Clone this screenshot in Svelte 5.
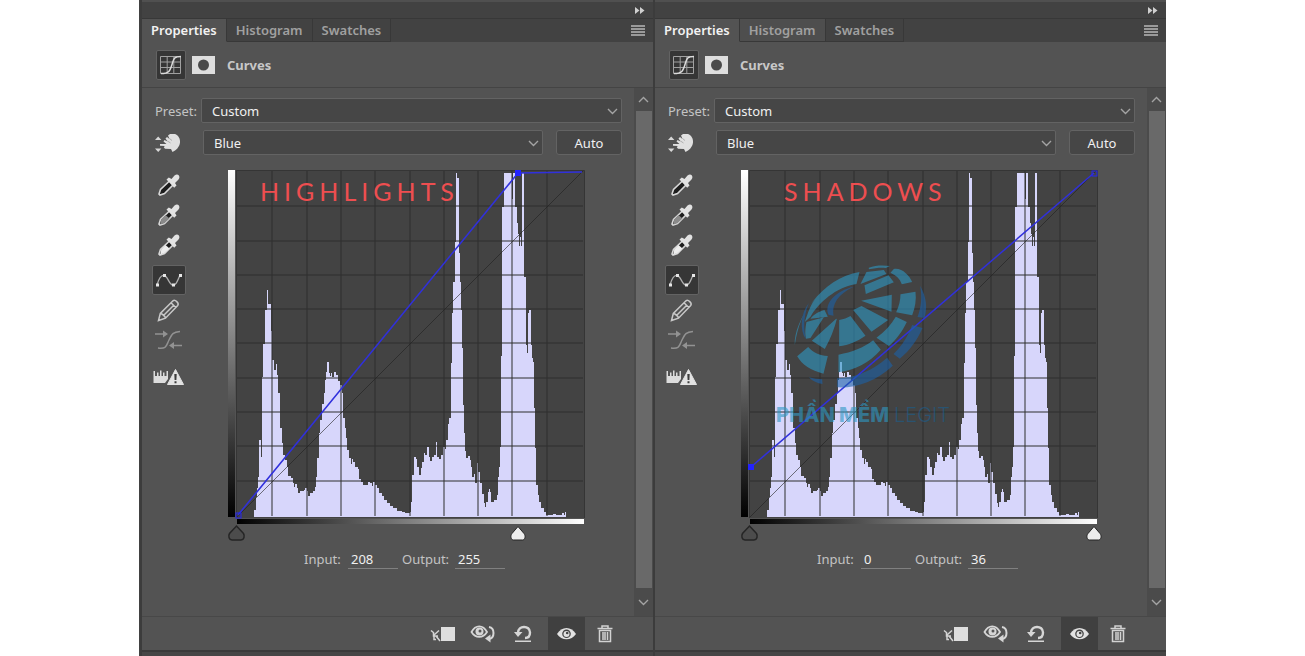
<script lang="ts">
	type Point = { x: number; y: number };

	type Panel = {
		id: string;
		hovered: string;
		title: string;
		titleX: number;
		curve: Point[];
		selected: number;
		whiteX: number;
		input: string;
		output: string;
		watermark: boolean;
	};

	const tabs = ['Properties', 'Histogram', 'Swatches'];

	const panels: Panel[] = $state([
		{
			id: 'highlights',
			hovered: '',
			title: 'HIGHLIGHTS',
			titleX: 23,
			curve: [
				{ x: 1, y: 345 },
				{ x: 281, y: 3 },
				{ x: 345, y: 2 }
			],
			selected: 1,
			whiteX: 281,
			input: '208',
			output: '255',
			watermark: false
		},
		{
			id: 'shadows',
			hovered: 'Histogram',
			title: 'SHADOWS',
			titleX: 34,
			curve: [
				{ x: 1, y: 297 },
				{ x: 344, y: 3 }
			],
			selected: 0,
			whiteX: 344,
			input: '0',
			output: '36',
			watermark: true
		}
	]);

	const gridX = [35, 70, 104, 138, 173, 207, 241, 275, 310];
	const gridY = [36, 71, 105, 139, 173, 208, 242, 276, 311];

	// [left edge, top] of every histogram step, y grows downwards
	const steps = [
		[17, 340], [19, 327], [20, 318], [21, 307], [22, 270], [24, 287], [25, 207], [26, 174],
		[28, 140], [30, 120], [31, 134], [34, 161], [35, 190], [37, 200], [39, 194], [40, 205],
		[41, 223], [43, 258], [45, 273], [46, 285], [48, 290], [50, 297], [51, 306], [54, 308],
		[56, 313], [57, 317], [58, 314], [60, 318], [61, 323], [63, 321], [67, 320], [68, 318],
		[70, 321], [71, 326], [73, 323], [76, 321], [78, 317], [79, 307], [80, 288], [82, 263],
		[83, 250], [85, 234], [87, 223], [88, 210], [89, 202], [90, 192], [92, 203], [93, 206],
		[94, 203], [95, 207], [97, 202], [99, 205], [101, 211], [103, 215], [105, 223], [106, 248],
		[108, 258], [109, 268], [110, 280], [112, 288], [114, 294], [115, 289], [116, 292], [118, 297],
		[121, 299], [122, 309], [124, 312], [126, 315], [131, 312], [133, 313], [135, 316], [136, 312],
		[138, 315], [140, 318], [142, 323], [145, 326], [147, 330], [150, 333], [153, 336], [156, 338],
		[160, 341], [165, 342], [168, 343], [173, 342], [174, 332], [175, 305], [177, 287], [179, 289],
		[180, 297], [182, 305], [184, 298], [185, 292], [187, 283], [188, 285], [190, 277], [192, 287],
		[193, 291], [195, 287], [197, 285], [199, 272], [200, 287], [202, 289], [204, 285], [206, 277],
		[208, 279], [209, 270], [211, 254], [212, 248], [214, 193], [215, 143], [216, 112], [218, 72],
		[219, 3], [220, 8], [222, 83], [223, 112], [224, 140], [225, 178], [226, 235], [227, 263],
		[228, 281], [229, 288], [231, 286], [233, 290], [234, 297], [235, 307], [237, 304], [238, 313],
		[240, 293], [241, 302], [243, 313], [245, 324], [247, 333], [248, 337], [249, 332], [251, 322],
		[252, 319], [253, 322], [254, 332], [257, 330], [260, 325], [261, 307], [262, 297], [263, 277],
		[264, 186], [265, 37], [267, 3], [275, 29], [276, 3], [278, 37], [280, 53], [281, 64],
		[282, 76], [283, 67], [284, 76], [285, 3], [287, 107], [289, 175], [290, 183], [291, 143],
		[292, 140], [294, 175], [295, 188], [296, 192], [297, 238], [298, 278], [299, 315], [301, 325],
		[302, 332], [304, 338], [307, 342], [309, 345], [316, 344], [319, 345], [325, 343], [327, 345],
		[328, 342], [329, 347]
	];

	const histogram = 'M17 347' + steps.map(([x, y]) => `H${x}V${y}`).join('') + 'Z';

	const points = (curve: Point[]) => curve.map((p) => `${p.x},${p.y}`).join(' ');
</script>

{#snippet chevron(up = false)}
	<svg class="chevron" width="11" height="7" viewBox="0 0 11 7" aria-hidden="true">
		<path d={up ? 'M1 6 5.500 1.500 10 6' : 'M1 1 5.500 5.500 10 1'} fill="none" stroke="#a4a4a4" stroke-width="1.400" />
	</svg>
{/snippet}

{#snippet dropper(fill: string, half = false)}
	<svg width="22" height="22" viewBox="0 0 22 22" aria-hidden="true">
		<path d="M12 6.500 2.500 15.500 1 20 2 21 6.500 19.500 15.500 10.500Z" fill={half ? '#1d1d1d' : fill} stroke="#d8d8d8" stroke-width="1.600" />
		{#if half}
			<path d="M7.500 11 11.500 14.500 6.300 19.200 2.200 20.500 3.200 15.500Z" {fill} />
		{/if}
		<path d="m8.500 5.500 2.300-2 2.700 1.500L16.500 1.500c3.500-3 6.500 1 4 4L17 9l1.500 2.500-2.300 2.200Z" fill="#e2e2e2" />
	</svg>
{/snippet}

<main class="workspace">
	{#each panels as panel (panel.id)}
		<section class="panel" aria-label={panel.title}>
			<div class="dock-bar">
				<button class="bare" aria-label="Collapse panels">
					<svg width="10" height="7" viewBox="0 0 10 7"><path d="M0 0l4.500 3.500L0 7zM5 0l4.500 3.500L5 7z" fill="#d0d0d0" /></svg>
				</button>
			</div>

			<div class="tab-bar">
				<div class="tabs" role="tablist">
					{#each tabs as tab, i}
						<button
							class="tab"
							class:active={i === 0}
							class:hovered={panel.hovered === tab}
							role="tab"
							aria-selected={i === 0}>{tab}</button
						>
					{/each}
				</div>
				<button class="bare" aria-label="Panel menu">
					<svg width="14" height="11" viewBox="0 0 14 11"><path d="M0 1h14M0 4h14M0 7h14M0 10h14" stroke="#b8b8b8" stroke-width="1.500" /></svg>
				</button>
			</div>

			<header class="heading">
				<button class="kind" aria-label="Curves adjustment">
					<svg width="24" height="20" viewBox="0 0 24 20">
						<path d="M1.500 1.500h20v17h-20zM8.200 1.500v17M14.800 1.500v17M1.500 7h20M1.500 12.500h20" fill="none" stroke="#a0a0a0" />
						<path d="M2 18.500c8 0 9-2.500 11-9S15.500 1.500 22 1.500" fill="none" stroke="#dcdcdc" stroke-width="1.500" />
					</svg>
				</button>
				<button class="bare" aria-label="Layer mask">
					<svg width="23" height="18" viewBox="0 0 23 18"><path d="M0 0h23v18H0z" fill="#dedede" /><circle cx="11.500" cy="9" r="5.500" fill="#4a4a4a" /></svg>
				</button>
				<h2>Curves</h2>
			</header>

			<div class="body">
				<div class="content">
					<div class="preset-row">
						<label for="{panel.id}-preset">Preset:</label>
						<div class="select">
							<select id="{panel.id}-preset"><option>Custom</option></select>
							{@render chevron()}
						</div>
					</div>

					<div class="channel-row">
						<button class="bare hand" aria-label="Adjust on image">
							<svg width="26" height="24" viewBox="0 -2 26 24">
								<path d="M0 7 3.200 3.500 6.400 7zM0 15.500h6.400L3.200 19z" fill="#d8d8d8" />
								<path d="M5 11h6.500L8.500 8.500l1-1.500 3 1.500L10.500 5.500 12 4l2.500 2L13 2.500 15 1h5c3 1 5.500 4.500 5 8.500-.5 4.500-4 8-7.500 9.500l-1.500-3-6-.3-1.200-1.500 1-1.200-4.800-.2z" fill="#e0e0e0" />
								<path d="m12.500 8 3 2M14.500 5.500l2.500 2" stroke="#999" stroke-width=".7" />
							</svg>
						</button>
						<div class="select">
							<select aria-label="Channel"><option>Blue</option></select>
							{@render chevron()}
						</div>
						<button class="auto">Auto</button>
					</div>

					<div class="editor">
						<div class="tools">
							<button class="tool" aria-label="Set black point">{@render dropper('#1d1d1d')}</button>
							<button class="tool" aria-label="Set gray point">{@render dropper('#8a8a8a', true)}</button>
							<button class="tool" aria-label="Set white point">{@render dropper('#ededed', true)}</button>
							<button class="tool pressed" aria-label="Edit points">
								<svg width="28" height="16" viewBox="0 0 28 16">
									<path d="M2 13C4 6 6 3 9 3.500c4 .5 5 9.500 9 9.500 3 0 4-3 7-10" fill="none" stroke="#b0b0b0" stroke-width="1.300" />
									<path d="M1 11.500h3v3H1zM8 2h3v3H8zM17 11.500h3v3h-3zM24 2h3v3h-3z" fill="#e6e6e6" />
								</svg>
							</button>
							<button class="tool" aria-label="Draw curve">
								<svg width="24" height="24" viewBox="0 0 24 24" fill="none" stroke="#c8c8c8" stroke-width="1.500">
									<path d="M1.500 22.500 3.300 15.500 16 2.800c2-1.600 6.500 2.200 4.700 4.700L8.500 20.200ZM3.300 15.500c2 .2 5 2.500 5.200 4.700M14 4.800l4.800 4.700M6 18 17 7" />
								</svg>
							</button>
							<button class="tool" aria-label="Smooth curve">
								<svg width="28" height="20" viewBox="0 0 28 20">
									<path d="M3 18c9 1 8-2 11-8s4-8 11-8.500" fill="none" stroke="#929292" stroke-width="1.500" />
									<path d="M0 4h8M18 15.500h9" stroke="#929292" stroke-width="1.500" />
									<path d="M8 .5 13 4 8 7.500zM19 12v7l-5-3.500z" fill="#929292" />
								</svg>
							</button>
							<button class="tool spaced" aria-label="Calculate a more accurate histogram">
								<svg width="32" height="18" viewBox="0 0 32 18">
									<path d="M.5 15V3H2v5h2V4.500h1.500V8H7V2.500h1.500V8H10V4.500h1.500V8h2V3H15v8l-3 4z" fill="#dcdcdc" />
									<path d="M22.500 1.500 30.500 16.500h-16z" fill="#e2e2e2" stroke="#e2e2e2" />
									<path d="M21.300 6h2.400l-.3 6h-1.800zM21.500 13.200h2v2h-2z" fill="#3c3c3c" />
								</svg>
							</button>
						</div>

						<div class="graph">
							<svg viewBox="-14 -2 367 376" role="img" aria-label="{panel.title} curve over histogram">
								<defs>
									<linearGradient id="{panel.id}-output-ramp" x1="0" y1="0" x2="0" y2="1">
										<stop offset="0" stop-color="#fff" />
										<stop offset="1" stop-color="#000" />
									</linearGradient>
									<linearGradient id="{panel.id}-input-ramp">
										<stop offset="0" stop-color="#000" />
										<stop offset="1" stop-color="#fff" />
									</linearGradient>
								</defs>

								<rect x="-9" y="0" width="7" height="347" fill="url(#{panel.id}-output-ramp)" />
								<rect x="0" y="349" width="347" height="5" fill="url(#{panel.id}-input-ramp)" />
								<rect class="plot" x="-1" y="0" width="348" height="348" />
								<path class="histogram" d={histogram} />

								<g class="grid">
									{#each gridX as x}
										<line x1={x} y1="1" x2={x} y2="346" />
									{/each}
									{#each gridY as y}
										<line x1="0" y1={y} x2="346" y2={y} />
									{/each}
								</g>
								<line class="baseline" x1="0" y1="347" x2="346" y2="1" />
								<path class="frame" d="M-.5 348V.5H347.500V348" />

								<text class="title" x={panel.titleX} y="31">{panel.title}</text>

								<polyline class="curve" points={points(panel.curve)} />
								{#each panel.curve as point, i}
									{#if i === panel.selected}
										<rect class="selected" x={point.x - 3} y={point.y - 3} width="6" height="6" />
									{:else if i !== 2}
										<rect class="handle" x={point.x - 2} y={point.y - 2} width="5" height="5" />
									{/if}
								{/each}

								{#if panel.watermark}
									<g class="watermark">
										<g transform="translate(10.500 80) scale(.3333)">
											<g class="light">
												<path d="M103 285C98 215 185 82 297 66L288 102C225 112 175 158 150 200 L133 216C142 190 150 160 170 140 125 185 112 230 103 285Z" />
												<path d="M325 53C345 45 370 45 388 48L376 54C360 52 345 54 325 58ZM318 66 370 60 378 72 300 102ZM312 106 384 76 400 97 316 132ZM302 152 394 134 393 185 Z" />
												<path d="M278 180 303 168 383 210 333 245ZM236 210C250 207 260 204 270 198L315 257C290 275 265 284 236 289Z" />
												<path d="M400 57C425 53 447 77 455 96L424 103C418 86 408 77 390 68ZM420 133 465 125C468 150 464 172 455 196L407 187C416 168 420 150 420 133Z" />
												<path d="M406 200 439 216C425 245 407 270 385 288L348 263C373 245 392 224 406 200ZM227 206 154 272 193 297Q218 252 229 207ZM190 202 138 216C133 239 134 258 137 266L150 264ZM150 206C160 192 178 184 192 180L202 200Z" />
												<path d="M234 314C275 307 309 293 338 271L361 299C325 340 283 360 234 367ZM110 319 143 291C158 308 178 317 202 318L189 371C151 362 125 345 110 319Z" />
											</g>
											<g class="deep">
												<path d="M479 107C500 145 500 175 492 204L471 201C483 169 485 142 479 107ZM455 225 486 234C470 270 450 300 418 326L399 312C428 285 443 255 455 225ZM380 323 397 347C345 395 285 415 230 412V385C286 383 337 361 380 323ZM145 382C158 386 174 388 185 388L186 402C170 400 157 394 145 382ZM280 110C225 122 190 160 204 194L219 197C213 162 233 132 280 110ZM136 268C117 241 120 190 145 159 127 203 130 239 136 268Z" />
											</g>
										</g>
										<text class="brand" x="26" y="252">PHẦN MỀM</text>
										<text class="brand-thin" x="144" y="252">LEGIT</text>
									</g>
								{/if}

								<path class="stop black" d="M-.5 356 6.500 363.500C8 366 7 370 4 370H-5C-8 370-9 366-7.500 363.500Z" />
								<path class="stop white" transform="translate({panel.whiteX} 0)" d="M0 356.500 6 363.500C8 366 7 370 4.500 370H-4.500C-7 370-8 366-6 363.500Z" />
							</svg>
						</div>
					</div>

					<div class="values">
						<label for="{panel.id}-input">Input:</label>
						<input id="{panel.id}-input" bind:value={panel.input} />
						<label for="{panel.id}-output">Output:</label>
						<input id="{panel.id}-output" bind:value={panel.output} />
					</div>
				</div>

				<div class="scrollbar">
					<span class="arrow">{@render chevron(true)}</span>
					<span class="thumb"></span>
					<span class="arrow">{@render chevron()}</span>
				</div>
			</div>

			<footer class="actions">
				<button aria-label="Clip to layer">
					<svg width="26" height="16" viewBox="0 0 26 16">
						<path d="M11 1h14v14H11z" fill="#dedede" />
						<path d="M1 4.500 4 7M9 4.500 4 9M3.500 6.500V10H8M4 9v4.500h2M6 10l4 5" fill="none" stroke="#d4d4d4" stroke-width="1.500" />
					</svg>
				</button>
				<button aria-label="View previous state">
					<svg width="26" height="20" viewBox="0 0 26 20">
						<path d="M1.500 8c4-7.500 11.500-7.500 15.500 0-4 6.500-11.500 6.500-15.500 0Z" fill="none" stroke="#d6d6d6" stroke-width="1.800" />
						<circle cx="9.500" cy="7.500" r="4" fill="#d6d6d6" /><circle cx="10" cy="7" r="1.500" fill="#555" />
						<path d="M19 3c6 1 6 11 0 12" fill="none" stroke="#d6d6d6" stroke-width="2" />
						<path d="M20.500 10.500v8l-5.500-4z" fill="#d6d6d6" />
					</svg>
				</button>
				<button class="reset" aria-label="Reset adjustments">
					<svg width="18" height="18" viewBox="0 0 18 18">
						<path d="M4 8c0-8 12-8 12-.5 0 3.500-2 5.500-5 5.500" fill="none" stroke="#d6d6d6" stroke-width="2.400" />
						<path d="M0 7h8.500L4 12zM1 15.500h16V17H1z" fill="#d6d6d6" />
					</svg>
				</button>
				<button class="visible" aria-label="Toggle layer visibility">
					<svg width="19" height="14" viewBox="0 0 19 14">
						<path d="M0 7C4.500-1 14.500-1 19 7 14.500 14 4.500 14 0 7Z" fill="#e2e2e2" />
						<circle cx="9.500" cy="6.800" r="4.300" fill="#444" /><circle cx="9.500" cy="7" r="3" fill="#e2e2e2" /><circle cx="10.200" cy="6" r="1.300" fill="#444" />
					</svg>
				</button>
				<button class="delete" aria-label="Delete adjustment">
					<svg width="16" height="18" viewBox="0 0 16 18" fill="none" stroke="#d2d2d2" stroke-width="1.500">
						<path d="M.5 3.500h15M5 3V1h6v2M2.500 5.500h11v11h-11zM6 7v8M8 7v8M10.500 7v8" />
					</svg>
				</button>
			</footer>
			<div class="dock-edge"></div>
		</section>
	{/each}
</main>

<style>
	:global(body) {
		background: #fff;
	}

	.workspace {
		box-sizing: border-box;
		display: grid;
		grid-template-columns: repeat(2, minmax(0, 1fr));
		max-width: 1027px;
		min-height: 100vh;
		margin: 0 auto;
		padding-left: 1px;
		background: #414141;
		font-family: 'Noto Sans', 'Open Sans', sans-serif;
		font-size: 13px;
		line-height: 18px;
		color: #c3c3c3;
	}

	.panel {
		display: flex;
		flex-direction: column;
		border-left: 2px solid #3c3c3c;
		background: #535353;
	}

	button,
	select,
	input {
		box-sizing: border-box;
		margin: 0;
		padding: 0;
		border: 0;
		background: none;
		color: #f0f0f0;
		font: inherit;
	}

	button {
		display: flex;
		align-items: center;
		justify-content: center;
	}

	svg {
		display: block;
	}

	.dock-bar,
	.tab-bar {
		display: flex;
		align-items: center;
		justify-content: flex-end;
		padding-right: 8px;
		background: #424242;
	}

	.dock-bar {
		height: 16px;
		border-top: 2px solid #505050;
		border-bottom: 1px solid #383838;
	}

	.tab-bar {
		justify-content: space-between;
		height: 23px;
	}

	.tabs {
		display: flex;
		height: 100%;
	}

	.tab {
		padding: 0 9px;
		border-right: 1px solid #383838;
		border-bottom: 1px solid #383838;
		color: #a0a0a0;
		font-size: 13px;
		font-weight: 600;
	}

	.tab.hovered {
		background: #4e4e4e;
	}

	.tab.active {
		border-bottom-color: #535353;
		background: #535353;
		color: #f2f2f2;
	}

	.heading {
		display: flex;
		align-items: center;
		height: 45px;
		padding-left: 14px;
		border-bottom: 1px solid #444;
	}

	.kind {
		width: 30px;
		height: 30px;
		margin-right: 6px;
		border: 1px solid #636363;
		border-radius: 2px;
		background: #363636;
	}

	h2 {
		margin: 0 0 0 12px;
		font-size: 13px;
		font-weight: 700;
		color: #c8c8c8;
	}

	.body {
		display: flex;
		flex: 1;
	}

	.content {
		flex: 1;
		min-width: 0;
		padding: 10px 12px 20px 10px;
	}

	.preset-row,
	.channel-row {
		display: flex;
		align-items: center;
		height: 25px;
		margin-bottom: 7px;
	}

	.preset-row label {
		width: 46px;
		padding-left: 3px;
	}

	.select {
		position: relative;
		flex: 1;
	}

	.select select {
		width: 100%;
		height: 25px;
		padding-left: 10px;
		border: 1px solid #636363;
		border-radius: 2px;
		background: #464646;
		appearance: none;
	}

	.select :global(.chevron) {
		position: absolute;
		top: 10px;
		right: 4px;
		pointer-events: none;
	}

	.hand {
		width: 26px;
		margin: 0 22px 0 3px;
	}

	.auto {
		width: 66px;
		height: 25px;
		margin-left: 13px;
		border: 1px solid #636363;
		border-radius: 3px;
		background: #464646;
	}

	.editor {
		display: flex;
		margin-top: 13px;
	}

	.tools {
		padding-top: 2px;
	}

	.tool {
		width: 34px;
		height: 30px;
		border-radius: 2px;
	}

	.tool.pressed {
		margin-top: 5px;
		border: 1px solid #636363;
		background: #363636;
	}

	.tool.spaced {
		margin-top: 7px;
	}

	.graph {
		flex: 1;
		min-width: 0;
		padding: 0 32px 0 37px;
	}

	.graph svg {
		width: 100%;
	}

	.plot {
		fill: #434343;
	}

	.histogram {
		fill: #d7d6fb;
		shape-rendering: crispEdges;
	}

	.grid line {
		stroke: #2d2d2d;
		stroke-opacity: 0.5;
		stroke-width: 2;
	}

	.baseline {
		stroke: #222;
		stroke-opacity: 0.6;
	}

	.frame {
		fill: none;
		stroke: #353535;
	}

	.title {
		fill: #ee4e50;
		font-family: Lato, sans-serif;
		font-size: 25px;
		letter-spacing: 5px;
	}

	.curve {
		fill: none;
		stroke: #3030dc;
		stroke-width: 1.5;
	}

	.selected {
		fill: #2323ff;
	}

	.handle {
		fill: none;
		stroke: #2626f0;
	}

	.watermark {
		opacity: 0.6;
	}

	.light,
	.brand {
		fill: #2f98c4;
	}

	.deep {
		fill: #1c61a8;
	}

	.brand,
	.brand-thin {
		font-family: Inter, sans-serif;
		font-size: 20px;
	}

	.brand {
		font-weight: 800;
	}

	.brand-thin {
		fill: #1b5f8f;
		font-weight: 300;
	}

	.stop {
		stroke: #252525;
	}

	.stop.black {
		fill: #4c4c4c;
		stroke-width: 1.5;
	}

	.stop.white {
		fill: #ececec;
	}

	.values {
		display: flex;
		align-items: center;
		margin-top: 5px;
		padding-left: 152px;
	}

	.values label {
		width: 44px;
	}

	.values input {
		width: 50px;
		height: 20px;
		padding-left: 3px;
		border-bottom: 1px solid #808080;
	}

	.values input + label {
		width: 53px;
		margin-left: 4px;
	}

	.scrollbar {
		display: flex;
		flex-direction: column;
		align-items: center;
		width: 19px;
		background: #4b4b4b;
	}

	.thumb {
		flex: 1;
		width: 16px;
		background: #696969;
	}

	.arrow {
		display: flex;
		align-items: center;
		height: 28px;
	}

	.arrow:first-child {
		height: 23px;
	}

	.actions {
		display: flex;
		align-items: stretch;
		justify-content: flex-end;
		height: 33px;
		padding-right: 29px;
		border-top: 1px solid #484848;
	}

	.actions button {
		width: 40px;
	}

	.actions .reset {
		margin-right: 5px;
	}

	.actions .visible {
		width: 37px;
		background: #404040;
	}

	.actions .delete {
		width: 39px;
	}

	.dock-edge {
		height: 4px;
		border-top: 2px solid #3a3a3a;
		background: #464646;
	}
</style>
